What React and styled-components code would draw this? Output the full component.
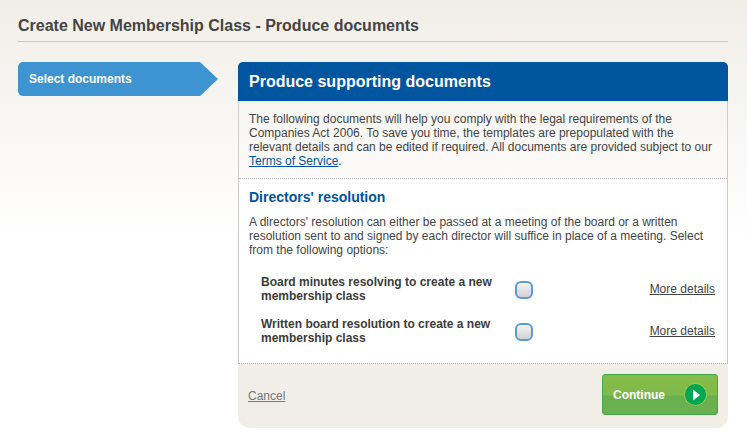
import React from 'react';
import styled, { createGlobalStyle } from 'styled-components';

const GlobalStyle = createGlobalStyle`
    html, body {
        margin: 0;
        padding: 0;
        height: 100%;
        background: #fff;
    }
    body {
        font-family: "Liberation Sans", Arial, sans-serif;
        color: #3c3c3c;
    }
`;

const options = [
    'Board minutes resolving to create a new membership class',
    'Written board resolution to create a new membership class',
];

function App() {
    return (
        <Page>
            <GlobalStyle />
            <PageTitle>Create New Membership Class - Produce documents</PageTitle>
            <Columns>
                <Sidebar>
                    <StepTab>Select documents</StepTab>
                </Sidebar>
                <Card>
                    <CardHeader>Produce supporting documents</CardHeader>
                    <CardBody>
                        <Intro>
                            The following documents will help you comply with the legal requirements of the
                            Companies Act 2006. To save you time, the templates are prepopulated with the
                            relevant details and can be edited if required. All documents are provided subject to our{' '}
                            <TermsLink href="#">Terms of Service</TermsLink>.
                        </Intro>
                        <Section>
                            <SectionTitle>Directors' resolution</SectionTitle>
                            <SectionText>
                                A directors' resolution can either be passed at a meeting of the board or a written
                                resolution sent to and signed by each director will suffice in place of a meeting. Select
                                from the following options:
                            </SectionText>
                            {options.map(option => (
                                <OptionRow key={option}>
                                    <OptionLabel>{option}</OptionLabel>
                                    <Checkbox />
                                    <DetailsLink href="#">More details</DetailsLink>
                                </OptionRow>
                            ))}
                        </Section>
                    </CardBody>
                    <CardFooter>
                        <CancelLink href="#">Cancel</CancelLink>
                        <ContinueButton>
                            Continue
                            <ContinueIcon>
                                <svg width="7" height="12" viewBox="0 0 7 12">
                                    <path d="M0 0.5 L7 6 L0 11.5 Z" fill="#fff" />
                                </svg>
                            </ContinueIcon>
                        </ContinueButton>
                    </CardFooter>
                </Card>
            </Columns>
        </Page>
    );
}

export default App;

const Page = styled.div`
    box-sizing: border-box;
    width: 747px;
    height: 445px;
    padding: 17px 19px 0 18px;
    overflow: hidden;
    background: linear-gradient(to bottom, #f1eee8 0, #fff 240px);
`;

const PageTitle = styled.h1`
    margin: 0 0 20px;
    height: 24px;
    border-bottom: 1px solid #c9c6c0;
    font-size: 16px;
    line-height: 18px;
    font-weight: bold;
    color: #444;
`;

const Columns = styled.div`
    display: flex;
    align-items: flex-start;
    gap: 20px;
`;

const Sidebar = styled.div`
    width: 200px;
    flex: none;
`;

const StepTab = styled.div`
    box-sizing: border-box;
    height: 34px;
    padding-left: 11px;
    background: #3e94d0;
    color: #fff;
    font-size: 12px;
    font-weight: bold;
    line-height: 35px;
    border-radius: 5px 0 0 5px;
    clip-path: polygon(0 0, 182px 0, 200px 17px, 182px 34px, 0 34px);
`;

const Card = styled.div`
    flex: 1;
    display: flex;
    flex-direction: column;
`;

const CardHeader = styled.h2`
    margin: 0;
    height: 39px;
    padding-left: 11px;
    background: #00559f;
    border-radius: 5px 5px 0 0;
    color: #fff;
    font-size: 16px;
    font-weight: bold;
    line-height: 39px;
`;

const CardBody = styled.div`
    border-left: 1px solid #ccc;
    border-right: 1px solid #ccc;
`;

const Intro = styled.p`
    margin: 0;
    padding: 11px 10px 10px;
    border-bottom: 1px dotted #b5b5b5;
    font-size: 12px;
    line-height: 14px;
    color: #444;
`;

const TermsLink = styled.a`
    color: #00559f;
    text-decoration: underline;
`;

const Section = styled.div`
    padding: 10px 12px 18px 10px;
    background: #fff;
`;

const SectionTitle = styled.h3`
    margin: 0 0 9px;
    font-size: 14px;
    line-height: 17px;
    font-weight: bold;
    color: #00559f;
`;

const SectionText = styled.p`
    margin: 0 0 18px;
    font-size: 12px;
    line-height: 14px;
    color: #444;
`;

const OptionRow = styled.div`
    display: flex;
    align-items: center;
    height: 28px;
    margin-bottom: 14px;
    padding-left: 12px;
    &:last-child {
        margin-bottom: 0;
    }
`;

const OptionLabel = styled.div`
    width: 242px;
    flex: none;
    font-size: 12px;
    line-height: 14px;
    font-weight: bold;
    color: #3c3c3c;
`;

const Checkbox = styled.span`
    box-sizing: border-box;
    width: 18px;
    height: 18px;
    margin: 2px 0 0 12px;
    border: 2px solid #5b9bd0;
    border-radius: 6px;
    background: linear-gradient(to bottom, #f4f4f4, #d2d2d2);
`;

const DetailsLink = styled.a`
    margin-left: auto;
    font-size: 12px;
    color: #444;
    text-decoration: underline;
`;

const CardFooter = styled.div`
    box-sizing: border-box;
    display: flex;
    align-items: center;
    justify-content: space-between;
    height: 65px;
    padding: 0 10px 3px 10px;
    border-top: 1px dotted #b5b5b5;
    background: #f1eee7;
    border-radius: 0 0 12px 12px;
`;

const CancelLink = styled.a`
    margin-top: 3px;
    font-size: 12px;
    color: #777;
    text-decoration: underline;
`;

const ContinueButton = styled.div`
    box-sizing: border-box;
    display: flex;
    align-items: center;
    justify-content: space-between;
    width: 116px;
    height: 41px;
    padding: 0 10px;
    border: 1px solid #3fa64a;
    border-radius: 3px;
    background: linear-gradient(to bottom, #85bd4a 0, #80ba4a 50%, #6ab04e 55%, #6ab04e 100%);
    color: #fff;
    font-size: 12px;
    font-weight: bold;
`;

const ContinueIcon = styled.span`
    box-sizing: border-box;
    display: flex;
    align-items: center;
    justify-content: center;
    width: 23px;
    height: 23px;
    padding-left: 2px;
    border: 1px solid #9ccb50;
    border-radius: 50%;
    background: #00a651;
`;
